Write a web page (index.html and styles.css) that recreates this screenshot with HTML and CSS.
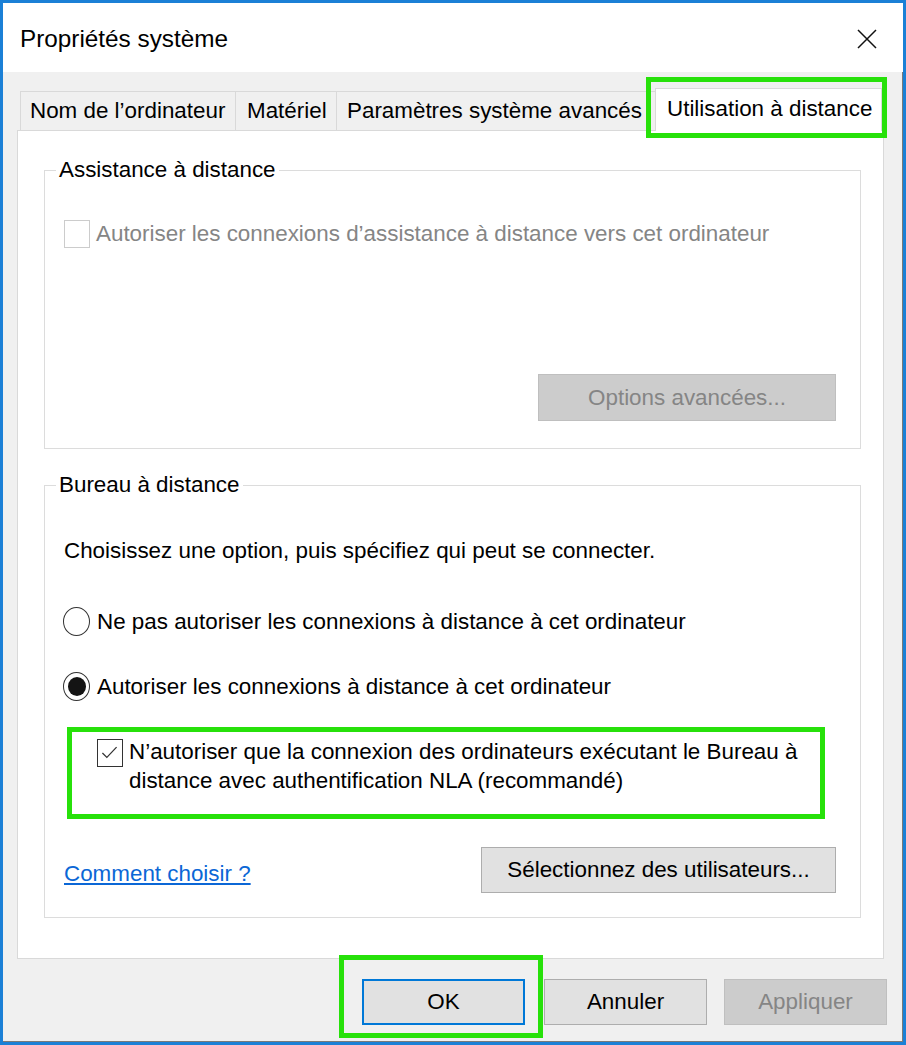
FILE: index.html
```html
<!DOCTYPE html>
<html lang="fr">
<head>
<meta charset="utf-8">
<title>Propriétés système</title>
<link rel="stylesheet" href="styles.css">
</head>
<body>
<div class="window">
  <div class="titlebar">
    <span class="title">Propriétés système</span>
    <svg class="close" viewBox="0 0 20 20" aria-label="Fermer"><path d="M1 1 L19 19 M19 1 L1 19" stroke="#111" stroke-width="1.5" fill="none"/></svg>
  </div>
  <div class="body">
    <div class="tabs">
      <div class="tab tab-name">Nom de l’ordinateur</div>
      <div class="tab tab-hw">Matériel</div>
      <div class="tab tab-last">Paramètres système avancés</div>
      <div class="tab selected">Utilisation à distance</div>
    </div>
    <div class="panel">
      <fieldset class="group g1">
        <legend>Assistance à distance</legend>
        <div class="check disabled"><span class="box"></span><span>Autoriser les connexions d’assistance à distance vers cet ordinateur</span></div>
        <div class="g1-actions"><button class="btn btn-disabled btn-options">Options avancées...</button></div>
      </fieldset>
      <fieldset class="group g2">
        <legend>Bureau à distance</legend>
        <p class="intro">Choisissez une option, puis spécifiez qui peut se connecter.</p>
        <div class="radio-row r1"><span class="radio"></span><span>Ne pas autoriser les connexions à distance à cet ordinateur</span></div>
        <div class="radio-row r2"><span class="radio on"></span><span>Autoriser les connexions à distance à cet ordinateur</span></div>
        <div class="nla">
          <span class="box checked"><svg viewBox="0 0 26 28"><path d="M5 14.5 L10 19.5 L21 8" stroke="#333" stroke-width="1.4" fill="none"/></svg></span>
          <span class="nla-text">N’autoriser que la connexion des ordinateurs exécutant le Bureau à distance avec authentification NLA (recommandé)</span>
        </div>
        <div class="g2-bottom">
          <a class="link" href="#">Comment choisir ?</a>
          <button class="btn btn-users">Sélectionnez des utilisateurs...</button>
        </div>
      </fieldset>
    </div>
    <div class="footer">
      <button class="btn btn-ok">OK</button>
      <button class="btn btn-cancel">Annuler</button>
      <button class="btn btn-disabled">Appliquer</button>
    </div>
  </div>
</div>
</body>
</html>
```
FILE: styles.css
```css
html, body {
  margin: 0;
  padding: 0;
}
body {
  font-family: "Liberation Sans", Arial, sans-serif;
  font-size: 22.4px;
  color: #000;
  background: #1b80d6;
}
.window {
  width: 906px;
  height: 1045px;
  box-sizing: border-box;
  border: 3px solid #1b80d6;
  display: flex;
  flex-direction: column;
  background: #f0f0f0;
  box-shadow: inset -1px -1px 0 #7a7a7a;
}
.titlebar {
  flex: none;
  height: 69px;
  box-sizing: border-box;
  background: #fff;
  display: flex;
  align-items: center;
  justify-content: space-between;
  padding: 3px 26px 0 17px;
}
.title {
  font-size: 24.3px;
}
.close {
  width: 20px;
  height: 20px;
}
.body {
  flex: 1;
  display: flex;
  flex-direction: column;
  padding: 16px 19px 17px 14px;
  min-height: 0;
}
.tabs {
  display: flex;
  align-items: flex-end;
  padding-left: 3px;
}
.tab {
  flex: none;
  height: 39px;
  box-sizing: border-box;
  border: 1px solid #d9d9d9;
  border-bottom: none;
  border-right: none;
  padding: 0 0 0 10px;
  display: flex;
  align-items: center;
  background: #f0f0f0;
  white-space: nowrap;
}
.tab-name {
  width: 215px;
  padding-left: 9px;
}
.tab-hw {
  width: 101px;
  padding-left: 11px;
}
.tab-last {
  width: 321px;
  border-right: 1px solid #d9d9d9;
}
.selected {
  width: 227px;
  height: 43px;
  margin-bottom: -1px;
  margin-left: -2px;
  background: #fff;
  border-right: 1px solid #d9d9d9;
  position: relative;
  z-index: 1;
  padding: 0 0 3px 11px;
}
.selected::after {
  content: "";
  position: absolute;
  left: -10px;
  top: -12px;
  right: -6px;
  bottom: -7px;
  border: 5px solid #27e10a;
  pointer-events: none;
}
.panel {
  flex: 1;
  background: #fff;
  border: 1px solid #d9d9d9;
  padding: 26px 22px 0 26px;
  display: flex;
  flex-direction: column;
}
fieldset.group {
  margin: 0;
  padding: 0;
  border: 1px solid #dcdcdc;
  min-width: 0;
}
fieldset.group legend {
  margin-left: 11px;
  padding: 0 3px;
  line-height: 26px;
}
.g2 {
  margin-top: 23px !important;
}
.check {
  display: flex;
  align-items: center;
  gap: 6px;
  height: 28px;
  margin: 37px 0 0 19px;
}
.box {
  flex: none;
  width: 26px;
  height: 28px;
  box-sizing: border-box;
  border: 1.5px solid #333;
  background: #fff;
  display: block;
}
.box svg {
  display: block;
  width: 23px;
  height: 25px;
}
.disabled {
  color: #858585;
}
.disabled .box {
  border-color: #cccccc;
}
.g1-actions {
  display: flex;
  justify-content: flex-end;
  margin: 126px 24px 27px 0;
}
.btn {
  font: inherit;
  color: #000;
  background: #e1e1e1;
  border: 1px solid #adadad;
  padding: 0;
  margin: 0;
  box-sizing: border-box;
  height: 46px;
  width: 163px;
}
.btn-disabled {
  background: #cccccc;
  border-color: #bfbfbf;
  color: #858585;
}
.btn-options {
  width: 298px;
  height: 47px;
}
.intro {
  margin: 39px 0 0 19px;
  line-height: 28px;
}
.radio-row {
  display: flex;
  align-items: center;
  gap: 7px;
  height: 29px;
  margin-left: 18px;
}
.r1 {
  margin-top: 42px;
}
.r2 {
  margin-top: 36px;
}
.radio {
  flex: none;
  width: 27px;
  height: 29px;
  box-sizing: border-box;
  border: 1.5px solid #333;
  border-radius: 50%;
  background: #fff;
  position: relative;
}
.radio.on::after {
  content: "";
  position: absolute;
  left: 3.5px;
  right: 3.5px;
  top: 4px;
  bottom: 4px;
  border-radius: 50%;
  background: #141414;
}
.nla {
  position: relative;
  display: flex;
  align-items: flex-start;
  gap: 6px;
  margin: 36px 40px 0 52px;
  line-height: 29px;
}
.nla .box {
  margin-top: 2px;
}
.nla::after {
  content: "";
  position: absolute;
  left: -30px;
  top: -10px;
  right: -5px;
  bottom: -24px;
  border: 5px solid #27e10a;
  pointer-events: none;
}
.g2-bottom {
  display: flex;
  justify-content: space-between;
  align-items: center;
  margin: 52px 24px 24px 19px;
}
.link {
  color: #0b67d6;
  text-decoration: underline;
  padding-top: 8px;
}
.btn-users {
  width: 355px;
  height: 46px;
}
.footer {
  flex: none;
  display: flex;
  justify-content: flex-end;
  gap: 17px;
  padding-top: 20px;
  margin-right: -3px;
}
.btn-ok {
  position: relative;
  border: 2px solid #0078d7;
  margin-right: 2px;
}
.btn-ok::after {
  content: "";
  position: absolute;
  left: -25px;
  top: -26px;
  right: -20px;
  bottom: -15px;
  border: 5px solid #27e10a;
  pointer-events: none;
}
```
